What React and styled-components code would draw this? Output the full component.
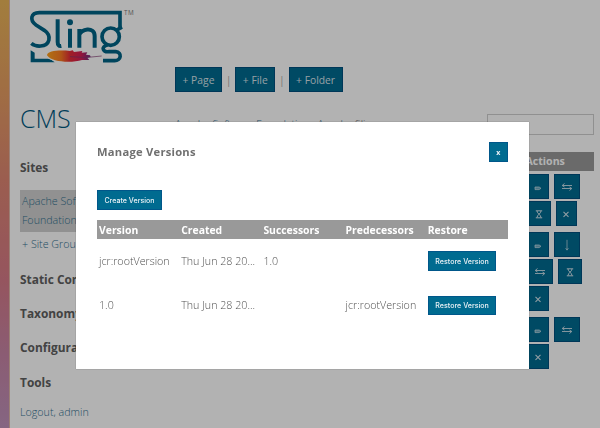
import React from "react";
import styled, { createGlobalStyle } from "styled-components";

const GlobalStyle = createGlobalStyle`
  * { box-sizing: border-box; }
  html, body { margin: 0; height: 100%; overflow: hidden; background: #fff; }
  body { font-family: "Open Sans", "Noto Sans", sans-serif; font-weight: 300; color: #666; font-size: 10.7px; }
  h1, h2 { margin: 0; }
`;

const Page = styled.div`
  display: flex;
  width: 600px;
  height: 428px;
  overflow: hidden;
`;

const Stripe = styled.div`
  flex: 0 0 10px;
  background: linear-gradient(#e8b458 0, #e6a060 80px, #de8672 180px, #d67a88 280px, #c884a4 350px, #bf92bb 428px);
  border-right: 1px solid #dfb7a8;
`;

const Sidebar = styled.aside`
  flex: 0 0 155px;
  padding: 8px 0 0 10px;
  display: flex;
  flex-direction: column;
`;

const LogoSvg = styled.svg`
  display: block;
  width: 108px;
  height: 56px;
  margin-left: 8px;
`;

const Title = styled.h1`
  height: 34px;
  line-height: 34px;
  margin-top: 37px;
  font-size: 25px;
  font-weight: 300;
  color: #00587f;
`;

const Heading = styled.h2`
  height: 20px;
  line-height: 20px;
  margin-top: ${(p) => p.$gap}px;
  font-size: 11.9px;
  font-weight: 700;
  color: #606060;
  white-space: nowrap;
`;

const SiteLink = styled.a`
  width: 86px;
  height: 42px;
  margin-top: 13px;
  padding: 2px 2px 0;
  background: #d0d0d0;
  color: #32708f;
  line-height: 19px;
  white-space: nowrap;
`;

const SubLink = styled.a`
  height: 20px;
  line-height: 20px;
  margin-top: ${(p) => p.$gap}px;
  padding-left: ${(p) => p.$indent || 0}px;
  color: #32708f;
  white-space: nowrap;
`;

const Main = styled.main`
  flex: 0 0 429px;
  padding: 67px 0 0 10px;
`;

const Toolbar = styled.div`
  display: flex;
  align-items: center;
  height: 25px;
`;

const ToolButton = styled.button`
  width: ${(p) => p.$w}px;
  height: 25px;
  padding: 0;
  border: 1px solid #00507f;
  background: #006a90;
  color: #d9e4ea;
  font: 400 10.3px "Open Sans", sans-serif;
`;

const Divider = styled.span`
  width: 13.3px;
  text-align: center;
  color: #777;
`;

const SearchRow = styled.div`
  display: flex;
  justify-content: space-between;
  margin-top: 22px;
`;

const Breadcrumb = styled.nav`
  padding-top: 3px;
  line-height: 14px;
  color: #32708f;
  font-size: 10.4px;

  span { color: #666; }
`;

const SearchInput = styled.input`
  width: 107px;
  height: 21px;
  border: 1px solid #cfcfcf;
  background: transparent;
`;

const TableHead = styled.div`
  display: flex;
  justify-content: flex-end;
  height: 19px;
  margin-top: 17px;
  line-height: 19px;
  background: #999;
  color: #fff;
  font-weight: 700;
`;

const ActionsHeading = styled.span`
  width: 68.5px;
  font-size: 10.6px;
`;

const ActionCell = styled.div`
  display: flex;
  flex-direction: column;
  gap: 2px;
  width: 67px;
  margin: ${(p) => p.$top}px 0 0 auto;
`;

const ActionLine = styled.div`
  display: flex;
  gap: 5px;
`;

const ActionButton = styled.button`
  display: flex;
  align-items: center;
  justify-content: center;
  width: ${(p) => p.$w}px;
  height: 25px;
  padding: 0;
  border: 1px solid #00507f;
  background: #006a90;
  color: #d0e2ea;
`;

const Overlay = styled.div`
  position: fixed;
  inset: 0;
  display: flex;
  align-items: flex-start;
  padding: 122px 0 0 76px;
  background: rgba(0, 0, 0, 0.3);
`;

const Dialog = styled.section`
  width: 453px;
  height: 247px;
  padding: 20px 21px;
  background: #fff;
  box-shadow: 0 0 1px rgba(0, 0, 0, 0.45);
`;

const DialogHeader = styled.header`
  display: flex;
  justify-content: space-between;
  height: 48px;
`;

const DialogTitle = styled.h2`
  height: 19px;
  line-height: 19px;
  font-size: 11.2px;
  font-weight: 700;
  letter-spacing: 0.25px;
  color: #707070;
`;

const SmallButton = styled.button`
  display: block;
  width: ${(p) => p.$w}px;
  height: 19.5px;
  padding: 1px 0 0;
  border: 1px solid #00578a;
  background: #006b90;
  color: #e9f1f5;
  font: ${(p) => (p.$bold ? 700 : 500)} 7.1px ${(p) => (p.$bold ? '"Open Sans"' : "Inter")}, sans-serif;
  white-space: nowrap;
`;

const VersionRow = styled.div`
  display: grid;
  grid-template-columns: repeat(5, 82.2px);
  align-items: center;
  height: 44.3px;
  font-size: 10.7px;
  color: #505050;
`;

const VersionHead = styled(VersionRow)`
  height: 19px;
  margin: 10.5px 0 0;
  background: #999;
  color: #fff;
  font-size: 10.4px;
  font-weight: 700;
`;

const Cell = styled.span`
  padding-left: 2px;
  white-space: nowrap;
`;

function Logo() {
  return (
    <LogoSvg viewBox="84 24 324 168" fill="none" stroke="#006486" strokeWidth="11">
      <path d="M360 88V38H118C91 38 89 62 108 75L133 91C157 108 149 137 122 138C110 139 100 135 94 130" />
      <path d="M173 58V125Q173 140 184 138M210 86V143M238 143V87M238 105C241 87 284 78 284 108V143" strokeWidth="12" />
      <circle cx="210" cy="67" r="9" fill="#006486" stroke="none" />
      <circle cx="332" cy="110" r="26" />
      <path d="M349 91L366 81M323 134C300 141 310 157 327 155H347C368 157 363 182 344 182H309" />
      <path d="M92 151L104 158V176H150L164 187H92Z" fill="#006486" stroke="none" />
      <defs>
        <linearGradient id="feather" gradientUnits="userSpaceOnUse" x1="141" x2="272" y1="0" y2="0">
          <stop offset="0" stopColor="#ffa21c" />
          <stop offset=".32" stopColor="#fa7a22" />
          <stop offset=".52" stopColor="#e62e37" />
          <stop offset=".78" stopColor="#d31d55" />
          <stop offset="1" stopColor="#6c2d82" />
        </linearGradient>
      </defs>
      <path d="M136 168C145 149 185 149 220 151L246 156L269 157L263 164L273 168L264 172L271 179L247 181C216 190 163 191 136 168Z" fill="#fff" stroke="#fff" strokeWidth="3" />
      <path d="M141 166C142 151 181 150 210 153L218 151L222 156L247 153L245 158L262 157L258 164L270 166L272 171L262 173L268 180L246 180C215 190 154 187 141 166Z" fill="url(#feather)" stroke="none" />
      <path d="M210 170Q260 176 305 168" stroke="#80366e" strokeWidth="2" />
      <text x="372" y="45" fill="#777" stroke="none" fontFamily="Open Sans" fontWeight="400" fontSize="19" textLength="29">TM</text>
    </LogoSvg>
  );
}

const iconPaths = {
  edit: <path d="M3 6H7.2L9 7.3L7.2 8.6H3Z" fill="currentColor" fillOpacity=".5" strokeWidth=".7" />,
  move: <path d="M1.5 4.5H11M1 7.5H10.5M3.5 2.5L1.2 4.5L3.5 6M8.5 6L10.8 7.5L8.5 9.5" strokeWidth=".9" />,
  wait: <path d="M2.8 2.8H9.2M2.8 9.8H9.2M4 3C4 5.5 8 7 8 9.5M8 3C8 5.5 4 7 4 9.5" />,
  remove: <path d="M3.5 3.8L8.5 8.8M8.5 3.8L3.5 8.8" strokeWidth="1.1" />,
  down: <path d="M6 0.8V11.3M4.6 9.2L6 11L7.4 9.2" strokeWidth=".7" />,
};

function Action({ icon, w }) {
  return (
    <ActionButton $w={w} aria-label={icon}>
      <svg width="12" height="12" viewBox="0 0 12 12" fill="none" stroke="currentColor" strokeWidth="1">
        {iconPaths[icon]}
      </svg>
    </ActionButton>
  );
}

const actionRows = [
  { top: 3, lines: [[["edit", 22], ["move", 26]], [["wait", 23.5], ["remove", 21.5]]] },
  { top: 6, lines: [[["edit", 22], ["down", 26]], [["move", 26], ["wait", 23.5]], [["remove", 22]]] },
  { top: 6, lines: [[["edit", 22], ["move", 26]], [["remove", 22]]] },
];

const versions = [
  { name: "jcr:rootVersion", created: "Thu Jun 28 20...", next: "1.0", prev: "" },
  { name: "1.0", created: "Thu Jun 28 20...", next: "", prev: "jcr:rootVersion" },
];

export default function App() {
  return (
    <>
      <GlobalStyle />
      <Page>
        <Stripe />
        <Sidebar>
          <Logo />
          <Title>CMS</Title>
          <Heading $gap={22}>Sites</Heading>
          <SiteLink>Apache Software<br />Foundation</SiteLink>
          <SubLink $gap={2} $indent={2}>+ Site Group</SubLink>
          <Heading $gap={15}>Static Content</Heading>
          <Heading $gap={14}>Taxonomy</Heading>
          <Heading $gap={14}>Configuration</Heading>
          <Heading $gap={15}>Tools</Heading>
          <SubLink $gap={10}>Logout, admin</SubLink>
        </Sidebar>
        <Main>
          <Toolbar>
            <ToolButton $w={47}>+ Page</ToolButton>
            <Divider>|</Divider>
            <ToolButton $w={40}>+ File</ToolButton>
            <Divider>|</Divider>
            <ToolButton $w={54}>+ Folder</ToolButton>
          </Toolbar>
          <SearchRow>
            <Breadcrumb>Apache Software Foundation › Apache <span>Sling</span></Breadcrumb>
            <SearchInput aria-label="Search" />
          </SearchRow>
          <TableHead><ActionsHeading>Actions</ActionsHeading></TableHead>
          {actionRows.map((row, i) => (
            <ActionCell key={i} $top={row.top}>
              {row.lines.map((line, j) => (
                <ActionLine key={j}>
                  {line.map(([icon, w]) => <Action key={icon} icon={icon} w={w} />)}
                </ActionLine>
              ))}
            </ActionCell>
          ))}
        </Main>
      </Page>
      <Overlay>
        <Dialog role="dialog">
          <DialogHeader>
            <DialogTitle>Manage Versions</DialogTitle>
            <SmallButton $w={19.5} $bold>x</SmallButton>
          </DialogHeader>
          <SmallButton $w={65}>Create Version</SmallButton>
          <VersionHead>
            {["Version", "Created", "Successors", "Predecessors", "Restore"].map((h) => <Cell key={h}>{h}</Cell>)}
          </VersionHead>
          {versions.map((v) => (
            <VersionRow key={v.name}>
              <Cell>{v.name}</Cell>
              <Cell>{v.created}</Cell>
              <Cell>{v.next}</Cell>
              <Cell>{v.prev}</Cell>
              <Cell><SmallButton $w={68.7}>Restore Version</SmallButton></Cell>
            </VersionRow>
          ))}
        </Dialog>
      </Overlay>
    </>
  );
}
